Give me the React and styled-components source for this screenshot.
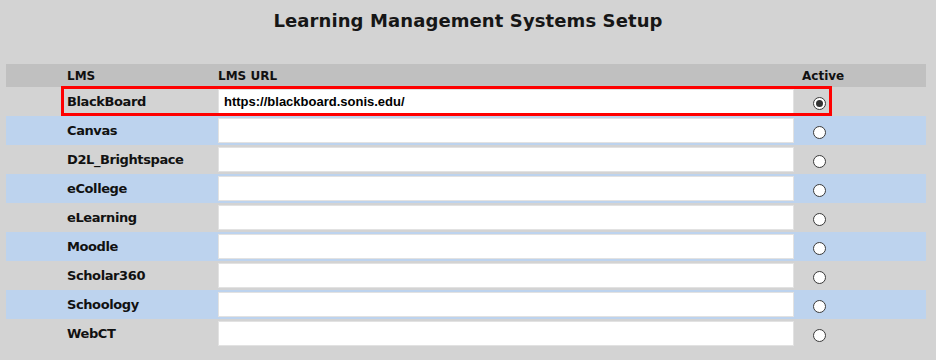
import React from "react";
import styled, { createGlobalStyle } from "styled-components";

const GlobalStyle = createGlobalStyle`
  html, body {
    margin: 0;
    padding: 0;
    background: #d3d3d3;
  }
  body {
    font-family: "DejaVu Sans", "Liberation Sans", sans-serif;
    color: #111;
  }
`;

const Page = styled.div`
  width: 936px;
  height: 360px;
  background: #d3d3d3;
  overflow: hidden;
`;

const Title = styled.h1`
  margin: 0;
  height: 64px;
  padding-top: 9px;
  box-sizing: border-box;
  text-align: center;
  font-size: 18px;
  line-height: 24px;
  letter-spacing: 0.1px;
  font-weight: bold;
  color: #161616;
`;

const Table = styled.div`
  margin: 0 10px 0 6px;
  display: flex;
  flex-direction: column;
`;

const Grid = styled.div`
  position: relative;
  display: grid;
  grid-template-columns: 61px 151px 575px 1fr;
  align-items: center;
`;

const HeaderRow = styled(Grid)`
  height: 23px;
  background: #c0c0c0;
  font-size: 12px;
  font-weight: bold;
`;

const HeadCell = styled.div`
  grid-column: ${(p) => p.$col};
  padding-left: ${(p) => p.$indent || 0}px;
`;

const Row = styled(Grid)`
  height: 29px;
  background: ${(p) => (p.$alt ? "#bdd3ee" : "#d3d3d3")};
`;

const Label = styled.div`
  grid-column: 2;
  font-size: 13px;
  letter-spacing: -0.4px;
  font-weight: bold;
`;

const UrlInput = styled.input`
  grid-column: 3;
  box-sizing: border-box;
  width: 576px;
  height: 25px;
  margin: 0;
  padding: 0 5px;
  border: 1px solid #e2e2e2;
  background: #fff;
  font-family: "Liberation Sans", Arial, sans-serif;
  font-weight: bold;
  font-size: 13px;
  color: #000;
  outline: none;
`;

const Radio = styled.span`
  grid-column: 4;
  align-self: start;
  margin: 10px 0 0 20px;
  width: 13px;
  height: 13px;
  box-sizing: border-box;
  border-radius: 50%;
  border: 1px solid #3a3a3a;
  background: #fff;
  display: flex;
  align-items: center;
  justify-content: center;

  &::after {
    content: "";
    width: 7px;
    height: 7px;
    border-radius: 50%;
    background: ${(p) => (p.$checked ? "#333" : "transparent")};
  }
`;

const Highlight = styled.span`
  position: absolute;
  left: 55px;
  top: -1px;
  width: 771px;
  height: 30px;
  box-sizing: border-box;
  border: 3px solid #f00;
  pointer-events: none;
`;

const systems = [
  { name: "BlackBoard", url: "https://blackboard.sonis.edu/", active: true },
  { name: "Canvas", url: "" },
  { name: "D2L_Brightspace", url: "" },
  { name: "eCollege", url: "" },
  { name: "eLearning", url: "" },
  { name: "Moodle", url: "" },
  { name: "Scholar360", url: "" },
  { name: "Schoology", url: "" },
  { name: "WebCT", url: "" },
];

export default function App() {
  return (
    <Page>
      <GlobalStyle />
      <Title>Learning Management Systems Setup</Title>
      <Table>
        <HeaderRow>
          <HeadCell $col={2}>LMS</HeadCell>
          <HeadCell $col={3}>LMS URL</HeadCell>
          <HeadCell $col={4} $indent={9}>
            Active
          </HeadCell>
        </HeaderRow>
        {systems.map((s, i) => (
          <Row key={s.name} $alt={i % 2 === 1}>
            <Label>{s.name}</Label>
            <UrlInput defaultValue={s.url} readOnly />
            <Radio $checked={s.active} />
            {s.active && <Highlight />}
          </Row>
        ))}
      </Table>
    </Page>
  );
}
